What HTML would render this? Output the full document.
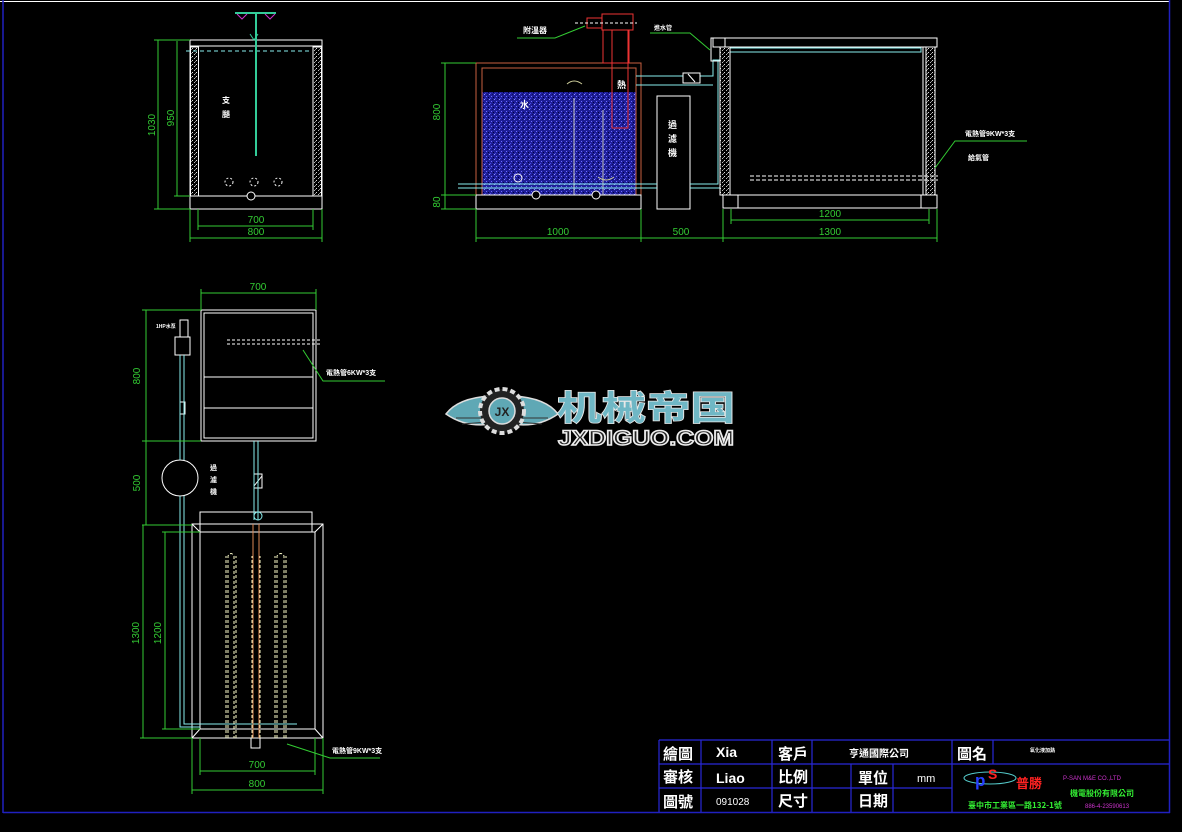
<!DOCTYPE html>
<html><head><meta charset="utf-8"><style>
html,body{margin:0;padding:0;background:#000;width:1182px;height:832px;overflow:hidden}
svg{display:block}
text{font-family:"Liberation Sans","Noto Sans CJK TC",sans-serif}
.cj{font-family:"Noto Sans CJK TC","WenQuanYi Zen Hei",sans-serif;font-weight:bold}
</style></head><body>
<svg width="1182" height="832" viewBox="0 0 1182 832" xmlns="http://www.w3.org/2000/svg">
<defs>
<pattern id="hat" width="4" height="4" patternUnits="userSpaceOnUse"><rect width="4" height="4" fill="#000"/><rect x="0" y="0" width="1" height="1" fill="#ddd"/><rect x="2" y="2" width="1" height="1" fill="#bbb"/><rect x="3" y="1" width="1" height="1" fill="#888"/></pattern>
<pattern id="wat" width="5" height="5" patternUnits="userSpaceOnUse"><rect width="5" height="5" fill="#1e1e98"/><rect x="1" y="1" width="1" height="1" fill="#7070ff"/><rect x="3" y="2" width="1" height="1" fill="#000040"/><rect x="0" y="3" width="1" height="1" fill="#4848e0"/><rect x="4" y="4" width="1" height="1" fill="#9090ff"/><rect x="2" y="4" width="1" height="1" fill="#101060"/></pattern>
</defs>
<!-- border -->
<line x1="0" y1="1.5" x2="1170" y2="1.5" stroke="#fff" stroke-width="1"/>
<line x1="3" y1="0" x2="3" y2="813" stroke="#2020c0" stroke-width="1.5"/>
<line x1="1169.5" y1="0" x2="1169.5" y2="813" stroke="#2020c0" stroke-width="1.5"/>
<line x1="3" y1="812.5" x2="1170" y2="812.5" stroke="#2020c0" stroke-width="1.5"/>

<!-- TOP LEFT VIEW -->
<g fill="none" stroke="#fff" stroke-width="1">
<rect x="190" y="40" width="132" height="169"/>
<line x1="190" y1="46" x2="322" y2="46"/>
<line x1="190" y1="196" x2="322" y2="196"/>
<rect x="190.5" y="47" width="8" height="149" fill="url(#hat)"/>
<rect x="313" y="47" width="8.5" height="149" fill="url(#hat)"/>
<circle cx="251" cy="196" r="4" fill="#000"/>
<circle cx="229" cy="182" r="4" stroke-dasharray="2 2"/>
<circle cx="254" cy="182" r="4" stroke-dasharray="2 2"/>
<circle cx="278" cy="182" r="4" stroke-dasharray="2 2"/>
</g>
<line x1="186" y1="51" x2="312" y2="51" stroke="#8ee" stroke-dasharray="4 3"/>
<line x1="256" y1="14" x2="256" y2="156" stroke="#3c9" stroke-width="2"/>
<line x1="235" y1="13" x2="276" y2="13" stroke="#3c9" stroke-width="2"/>
<path d="M237 14 L242 19 L247 14 M265 14 L270 19 L275 14" stroke="#c3c" fill="none"/>
<path d="M250 34 L254 40 L258 34" stroke="#3c9" fill="none"/>
<text x="222" y="103" fill="#fff" font-size="8" class="cj">支</text>
<text x="222" y="117" fill="#fff" font-size="8" class="cj">腿</text>
<g stroke="#3c3" fill="none" stroke-width="1">
<line x1="158" y1="40" x2="158" y2="209"/><line x1="154" y1="40" x2="190" y2="40"/><line x1="154" y1="209" x2="190" y2="209"/>
<line x1="177" y1="41" x2="177" y2="196"/><line x1="174" y1="196" x2="190" y2="196"/>
<line x1="198" y1="226" x2="313" y2="226"/><line x1="198" y1="209" x2="198" y2="230"/><line x1="313" y1="209" x2="313" y2="230"/>
<line x1="190" y1="238" x2="322" y2="238"/><line x1="190" y1="209" x2="190" y2="242"/><line x1="322" y1="209" x2="322" y2="242"/>
</g>
<g fill="#3c3" font-size="10">
<text transform="translate(155,125) rotate(-90)" text-anchor="middle">1030</text>
<text transform="translate(174,118) rotate(-90)" text-anchor="middle">950</text>
<text x="256" y="223" text-anchor="middle">700</text>
<text x="256" y="235" text-anchor="middle">800</text>
</g>

<!-- TOP MIDDLE VIEW -->
<rect x="482" y="92" width="154" height="103" fill="url(#wat)"/>
<g fill="none" stroke="#c86040">
<rect x="476" y="63" width="165" height="132"/>
<rect x="482" y="68" width="154" height="127"/>
</g>
<g fill="none" stroke="#e33" stroke-width="1">
<rect x="602" y="14" width="31" height="16"/>
<rect x="587" y="18" width="15" height="10"/>
<rect x="603" y="30" width="26" height="33"/>
<rect x="612" y="30" width="16" height="98"/>
</g>
<line x1="575" y1="23" x2="637" y2="23" stroke="#fff" stroke-dasharray="3 2"/>
<rect x="476" y="195" width="165" height="14" fill="none" stroke="#fff"/>
<circle cx="518" cy="178" r="4" fill="none" stroke="#fff"/>
<circle cx="536" cy="195" r="4" fill="#000" stroke="#fff"/>
<circle cx="596" cy="195" r="4" fill="#000" stroke="#fff"/>
<line x1="574" y1="98" x2="574" y2="195" stroke="#ccc"/>
<line x1="603" y1="110" x2="603" y2="195" stroke="#ccc"/>
<path d="M567 84 Q574 78 582 84" stroke="#cc9" fill="none"/>
<path d="M598 177 Q606 183 614 177" stroke="#cc9" fill="none"/>
<text x="520" y="108" fill="#fff" font-size="9" class="cj">水</text>
<text x="617" y="88" fill="#fff" font-size="9" class="cj">熱</text>
<rect x="657" y="96" width="33" height="113" fill="#000" stroke="#fff"/>
<text x="668" y="128" fill="#fff" font-size="9" class="cj">過</text>
<text x="668" y="142" fill="#fff" font-size="9" class="cj">濾</text>
<text x="668" y="156" fill="#fff" font-size="9" class="cj">機</text>
<g fill="none" stroke="#8ee">
<path d="M636 76 L713 76 L713 60 L722 60 M636 85 L713 85"/>
<path d="M458 184 L657 184 M458 188 L657 188 M690 184 L718 184 L718 60 M690 188 L721 188 L721 62"/>
<rect x="726" y="48" width="195" height="4"/>
</g>
<rect x="683" y="73" width="17" height="10" fill="#000" stroke="#fff"/>
<line x1="688" y1="74" x2="695" y2="82" stroke="#fff"/>
<g fill="none" stroke="#fff">
<rect x="713" y="38" width="224" height="9"/>
<rect x="711" y="38" width="14" height="23"/>
<rect x="720" y="47" width="10" height="148" fill="url(#hat)"/>
<rect x="926" y="47" width="9" height="148" fill="url(#hat)"/>
<line x1="923" y1="47" x2="923" y2="195"/>
<line x1="723" y1="195" x2="937" y2="195"/>
<rect x="723" y="195" width="15" height="13"/>
<rect x="921" y="195" width="16" height="13"/>
<line x1="738" y1="208" x2="921" y2="208"/>
</g>
<line x1="750" y1="176" x2="938" y2="176" stroke="#fff" stroke-dasharray="4 2"/>
<line x1="750" y1="180" x2="938" y2="180" stroke="#fff" stroke-dasharray="4 2"/>
<g stroke="#3c3" fill="none">
<line x1="445" y1="63" x2="445" y2="209"/><line x1="441" y1="63" x2="476" y2="63"/><line x1="441" y1="195" x2="476" y2="195"/><line x1="441" y1="209" x2="476" y2="209"/>
<line x1="476" y1="238" x2="937" y2="238"/>
<line x1="476" y1="209" x2="476" y2="242"/><line x1="641" y1="209" x2="641" y2="242"/><line x1="723" y1="209" x2="723" y2="242"/><line x1="937" y1="209" x2="937" y2="242"/>
<line x1="731" y1="220" x2="929" y2="220"/><line x1="731" y1="209" x2="731" y2="224"/><line x1="929" y1="209" x2="929" y2="224"/>
<path d="M517 38 L555 38 L585 26"/><path d="M650 33 L690 33 L710 50"/>
<path d="M935 168 L955 141 L1027 141"/>
</g>
<g fill="#3c3" font-size="10">
<text transform="translate(440,112) rotate(-90)" text-anchor="middle">800</text>
<text transform="translate(440,202) rotate(-90)" text-anchor="middle">80</text>
<text x="558" y="235" text-anchor="middle">1000</text>
<text x="681" y="235" text-anchor="middle">500</text>
<text x="830" y="235" text-anchor="middle">1300</text>
<text x="830" y="217" text-anchor="middle">1200</text>
</g>
<g fill="#fff" font-size="8" class="cj">
<text x="523" y="33">附溫器</text>
<text x="654" y="30" font-size="6">進水管</text>
<text x="965" y="136" font-size="7">電熱管9KW*3支</text>
<text x="968" y="160" font-size="7">給氣管</text>
</g>

<!-- BOTTOM LEFT VIEW -->
<g fill="none" stroke="#fff">
<rect x="201" y="310" width="115" height="131"/>
<rect x="204" y="313" width="109" height="125"/>
<line x1="204" y1="377" x2="313" y2="377"/>
<line x1="204" y1="408" x2="313" y2="408"/>
<rect x="175" y="337" width="15" height="18"/>
<rect x="180" y="320" width="8" height="17"/>
<circle cx="180" cy="478" r="18"/>
<rect x="180" y="402" width="5" height="12"/>
<rect x="254" y="474" width="8" height="14"/>
<line x1="254" y1="486" x2="262" y2="476"/>
<rect x="200" y="512" width="112" height="20"/>
<rect x="192" y="524" width="131" height="214"/>
<rect x="200" y="532" width="115" height="197"/>
<line x1="192" y1="524" x2="200" y2="532"/><line x1="323" y1="524" x2="315" y2="532"/>
<line x1="192" y1="738" x2="200" y2="729"/><line x1="323" y1="738" x2="315" y2="729"/>
<rect x="251" y="738" width="9" height="10"/>
</g>
<line x1="227" y1="340" x2="320" y2="340" stroke="#fff" stroke-dasharray="3 2"/>
<line x1="227" y1="344" x2="320" y2="344" stroke="#fff" stroke-dasharray="3 2"/>
<g fill="none" stroke="#8ee">
<path d="M180 355 L180 460 M184 355 L184 460 M180 496 L180 727 L200 727 M184 496 L184 724 L297 724"/>
<path d="M254 441 L254 520 M258 441 L258 520"/>
<circle cx="258" cy="516" r="4"/>
</g>
<g fill="none" stroke="#ffc" stroke-dasharray="3 2">
<path d="M228 738 L228 556 Q231 551 234 556 L234 738 M226 738 L226 556 M236 738 L236 556"/>
<path d="M277 738 L277 556 Q281 551 284 556 L284 738 M275 738 L275 556 M286 738 L286 556"/>
<path d="M252 738 L252 556 M260 738 L260 556"/>
</g>
<line x1="253" y1="524" x2="253" y2="738" stroke="#d85"/>
<line x1="259" y1="524" x2="259" y2="738" stroke="#d85"/>
<g stroke="#3c3" fill="none">
<line x1="201" y1="293" x2="316" y2="293"/><line x1="201" y1="289" x2="201" y2="310"/><line x1="316" y1="289" x2="316" y2="310"/>
<line x1="146" y1="310" x2="146" y2="525"/><line x1="142" y1="310" x2="201" y2="310"/><line x1="142" y1="441" x2="201" y2="441"/><line x1="142" y1="525" x2="192" y2="525"/>
<line x1="143" y1="525" x2="143" y2="738"/><line x1="140" y1="738" x2="192" y2="738"/>
<line x1="165" y1="532" x2="165" y2="729"/><line x1="162" y1="532" x2="200" y2="532"/><line x1="162" y1="729" x2="200" y2="729"/>
<line x1="200" y1="771" x2="315" y2="771"/><line x1="200" y1="738" x2="200" y2="775"/><line x1="315" y1="738" x2="315" y2="775"/>
<line x1="192" y1="790" x2="323" y2="790"/><line x1="192" y1="738" x2="192" y2="794"/><line x1="323" y1="738" x2="323" y2="794"/>
<path d="M303 350 L323 381 L385 381"/>
<path d="M287 744 L330 758 L380 758"/>
</g>
<g fill="#3c3" font-size="10">
<text x="258" y="290" text-anchor="middle">700</text>
<text transform="translate(140,376) rotate(-90)" text-anchor="middle">800</text>
<text transform="translate(140,483) rotate(-90)" text-anchor="middle">500</text>
<text transform="translate(139,633) rotate(-90)" text-anchor="middle">1300</text>
<text transform="translate(161,633) rotate(-90)" text-anchor="middle">1200</text>
<text x="257" y="768" text-anchor="middle">700</text>
<text x="257" y="787" text-anchor="middle">800</text>
</g>
<g fill="#fff" font-size="7" class="cj">
<text x="326" y="375">電熱管6KW*3支</text>
<text x="332" y="753">電熱管9KW*3支</text>
<text x="156" y="328" font-size="5">1HP水泵</text>
<text x="210" y="470">過</text><text x="210" y="482">濾</text><text x="210" y="494">機</text>
</g>

<!-- LOGO -->
<g>
<path d="M446 414 Q458 398 490 396 L492 424 Q466 428 446 414Z" fill="#5fa8b5" stroke="#ddd" stroke-width="1.5"/>
<path d="M456 418 L488 418 M462 424 L488 422" stroke="#333" stroke-width="1"/>
<path d="M558 414 Q546 398 514 396 L512 424 Q538 428 558 414Z" fill="#5fa8b5" stroke="#ddd" stroke-width="1.5"/>
<path d="M548 418 L516 418 M542 424 L516 422" stroke="#333" stroke-width="1"/>
<circle cx="502" cy="411" r="22" fill="#222" stroke="#ddd" stroke-width="4" stroke-dasharray="5 3"/>
<circle cx="502" cy="411" r="13" fill="#5fa8b5" stroke="#ddd" stroke-width="1.5"/>
<text x="502" y="416" fill="#222" font-size="12" font-weight="bold" text-anchor="middle" font-family="Liberation Serif,serif">JX</text>
<text x="557" y="420" fill="#6fb7c5" stroke="#e8e8e8" stroke-width="1.5" paint-order="stroke" font-size="34" class="cj" textLength="178" lengthAdjust="spacingAndGlyphs">机械帝国</text>
<text x="558" y="445" fill="#222" stroke="#eee" stroke-width="1.5" font-size="21" font-weight="bold" textLength="176" lengthAdjust="spacingAndGlyphs">JXDIGUO.COM</text>
</g>

<!-- TITLE BLOCK -->
<g stroke="#2828d8" stroke-width="1.2" fill="none">
<line x1="659" y1="740" x2="1169" y2="740"/>
<line x1="659" y1="764" x2="1169" y2="764"/>
<line x1="659" y1="788" x2="952" y2="788"/>
<line x1="659" y1="740" x2="659" y2="812"/>
<line x1="701" y1="740" x2="701" y2="812"/>
<line x1="772" y1="740" x2="772" y2="812"/>
<line x1="812" y1="740" x2="812" y2="812"/>
<line x1="851" y1="764" x2="851" y2="812"/>
<line x1="893" y1="764" x2="893" y2="812"/>
<line x1="952" y1="740" x2="952" y2="812"/>
<line x1="993" y1="740" x2="993" y2="764"/>
</g>
<g fill="#fff" class="cj" font-size="15">
<text x="663" y="759">繪圖</text>
<text x="663" y="782">審核</text>
<text x="663" y="807">圖號</text>
<text x="778" y="759">客戶</text>
<text x="778" y="782">比例</text>
<text x="778" y="806">尺寸</text>
<text x="858" y="783">單位</text>
<text x="858" y="806">日期</text>
<text x="957" y="759">圖名</text>
<text x="849" y="757" font-size="10">亨通國際公司</text>
<text x="1030" y="752" font-size="5">氧化液加熱</text>
</g>
<g fill="#fff">
<text x="716" y="757" font-size="14" font-weight="bold" font-family="Liberation Mono,monospace">Xia</text>
<text x="716" y="783" font-size="14" font-weight="bold" font-family="Liberation Mono,monospace">Liao</text>
<text x="716" y="805" font-size="10" font-family="Liberation Sans,sans-serif">091028</text>
<text x="917" y="782" font-size="11" font-family="Liberation Sans,sans-serif">mm</text>
</g>
<ellipse cx="990" cy="778" rx="26" ry="6" fill="none" stroke="#5cc"/>
<text x="975" y="786" fill="#2840ff" font-size="17" font-weight="bold">p</text>
<text x="988" y="779" fill="#f22" font-size="14" font-weight="bold">S</text>
<text x="1016" y="788" fill="#f22" font-size="13" class="cj">普勝</text>
<text x="1063" y="780" fill="#c3c" font-size="6">P-SAN M&amp;E CO.,LTD</text>
<text x="1070" y="796" fill="#3e3" font-size="8" class="cj">機電股份有限公司</text>
<text x="968" y="808" fill="#3e3" font-size="8" class="cj">臺中市工業區一路132-1號</text>
<text x="1085" y="808" fill="#c3c" font-size="6">886-4-23590613</text>
</svg>
</body></html>
